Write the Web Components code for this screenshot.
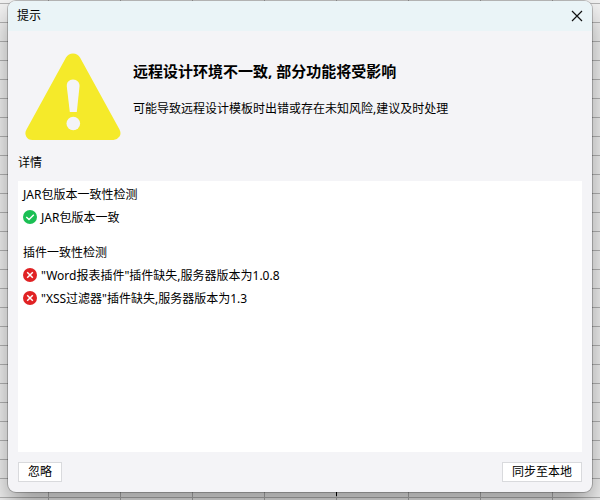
<!DOCTYPE html>
<html lang="zh-CN">
<head>
<meta charset="utf-8">
<meta name="viewport" content="width=device-width, initial-scale=1">
<title>提示</title>
<style>
  * { box-sizing: border-box; }
  body {
    margin: 0;
    font: 12px/18px "Noto Sans", "Noto Sans CJK SC", sans-serif;
    color: #000;
  }
</style>
</head>
<body>
<sheet-backdrop>
  <message-dialog title="提示">
    <warning-banner>
      <span slot="heading">远程设计环境不一致, 部分功能将受影响</span>
      可能导致远程设计模板时出错或存在未知风险,建议及时处理
    </warning-banner>
    <detail-panel label="详情">
      <check-group label="JAR包版本一致性检测">
        <check-item status="ok">JAR包版本一致</check-item>
      </check-group>
      <check-group label="插件一致性检测">
        <check-item status="error">"Word报表插件"插件缺失,服务器版本为1.0.8</check-item>
        <check-item status="error">"XSS过滤器"插件缺失,服务器版本为1.3</check-item>
      </check-group>
    </detail-panel>
    <dialog-button slot="actions">忽略</dialog-button>
    <dialog-button slot="actions">同步至本地</dialog-button>
  </message-dialog>
</sheet-backdrop>

<script>
function attach(el, html) {
  const root = el.attachShadow({ mode: 'open' });
  const template = document.createElement('template');
  template.innerHTML = html;
  root.append(template.content.cloneNode(true));
  return root;
}

// spreadsheet cells behind the dialog, with the page break mark at the bottom
class SheetBackdrop extends HTMLElement {
  constructor() {
    super();
    attach(this, `
      <style>
        :host {
          display: flex;
          box-sizing: border-box;
          min-height: 100vh;
          padding: 1px 8px 8px;
          overflow: hidden;
          background-color: #f3f3f3;
          background-image:
            linear-gradient(#000, #000),
            linear-gradient(#b4b4b4 1px, transparent 1px),
            linear-gradient(90deg, #b4b4b4 1px, transparent 1px);
          background-size: 1px 16px, 100% 19px, 72px 100%;
          background-position: left 336px bottom 4px, 0 3px, 48px 0;
          background-repeat: no-repeat, repeat, repeat;
        }
      </style>
      <slot></slot>
    `);
  }
}
customElements.define('sheet-backdrop', SheetBackdrop);

class MessageDialog extends HTMLElement {
  constructor() {
    super();
    this.root = attach(this, `
      <style>
        :host {
          display: flex;
          flex-direction: column;
          flex: 1;
          min-width: 0;
          border-radius: 8px;
          background: #f4f4f7;
          box-shadow: 0 0 0 1px rgba(0, 0, 0, .22), 0 14px 28px rgba(0, 0, 0, .38);
        }
        header {
          display: flex;
          align-items: center;
          justify-content: space-between;
          height: 30px;
          padding: 0 9px;
          border-radius: 8px 8px 0 0;
          background: #eaf4f7;
        }
        h1 {
          margin: 0;
          font: inherit;
        }
        .close {
          display: flex;
          padding: 0;
          border: 0;
          background: none;
          cursor: pointer;
        }
        .content {
          display: flex;
          flex-direction: column;
          flex: 1;
          padding: 0 10px;
        }
        footer {
          display: flex;
          justify-content: space-between;
          padding: 10px;
        }
      </style>
      <header>
        <h1></h1>
        <button class="close" type="button" aria-label="关闭">
          <svg width="12" height="12" viewBox="0 0 12 12" fill="none" stroke="#111" stroke-width="1.2">
            <path d="M1 1l10 10M11 1L1 11"/>
          </svg>
        </button>
      </header>
      <div class="content"><slot></slot></div>
      <footer><slot name="actions"></slot></footer>
    `);
  }

  connectedCallback() {
    this.root.querySelector('h1').textContent = this.getAttribute('title') || '';
    this.root.querySelector('.close').onclick = () => this.remove();
  }
}
customElements.define('message-dialog', MessageDialog);

class WarningBanner extends HTMLElement {
  constructor() {
    super();
    attach(this, `
      <style>
        :host {
          display: flex;
          gap: 12px;
          padding: 22px 0 13px 7px;
        }
        svg { flex: none; }
        h2 {
          margin: 8px 0 19px;
          font-size: 15px;
          line-height: 20px;
          font-weight: 700;
        }
        p { margin: 0; }
      </style>
      <svg width="96" height="88" viewBox="0 0 96 88">
        <path fill="#f5ea2a" d="M41 4.5Q43.500 0.500 48 0.500T55 4.500L94.500 76.500Q96.500 80.500 94.500 83.500T88.500 87H7.500Q3 87 1.200 83.500T1.500 76.500Z"/>
        <path fill="#f4f4f7" d="M48 26.500c4 0 6.800 2.900 6.500 7L51.800 59H44.800L41.800 33.500c-.4-4.100 2.200-7 6.200-7z"/>
        <circle cx="48.300" cy="70.500" r="6.800" fill="#f4f4f7"/>
      </svg>
      <div>
        <h2><slot name="heading"></slot></h2>
        <p><slot></slot></p>
      </div>
    `);
  }
}
customElements.define('warning-banner', WarningBanner);

class DetailPanel extends HTMLElement {
  constructor() {
    super();
    this.root = attach(this, `
      <style>
        :host {
          display: flex;
          flex-direction: column;
          flex: 1;
        }
        h3 {
          margin: 0 0 9px;
          font: inherit;
        }
        .box {
          flex: 1;
          padding: 5px;
          background: #fff;
        }
      </style>
      <h3></h3>
      <div class="box"><slot></slot></div>
    `);
  }

  connectedCallback() {
    this.root.querySelector('h3').textContent = this.getAttribute('label') || '';
  }
}
customElements.define('detail-panel', DetailPanel);

class CheckGroup extends HTMLElement {
  constructor() {
    super();
    this.root = attach(this, `
      <style>
        :host {
          display: flex;
          flex-direction: column;
          gap: 5px;
          margin-bottom: 17px;
        }
        h4 {
          margin: 0;
          font: inherit;
        }
      </style>
      <h4></h4>
      <slot></slot>
    `);
  }

  connectedCallback() {
    this.root.querySelector('h4').textContent = this.getAttribute('label') || '';
  }
}
customElements.define('check-group', CheckGroup);

const STATUS_ICONS = {
  ok: `<circle cx="7" cy="7" r="7" fill="#1abf54"/>
       <path d="M3.300 7l2.700 2.600 4.800-4.800" fill="none" stroke="#fff" stroke-width="1.400"/>`,
  error: `<circle cx="7" cy="7" r="7" fill="#e02224"/>
       <path d="M4.200 4.200l5.600 5.600M9.800 4.200l-5.600 5.600" fill="none" stroke="#fff" stroke-width="1.500"/>`
};

class CheckItem extends HTMLElement {
  constructor() {
    super();
    this.root = attach(this, `
      <style>
        :host {
          display: flex;
          align-items: flex-start;
          gap: 4px;
        }
        svg {
          flex: none;
          margin-top: 1px;
        }
      </style>
      <svg width="14" height="14" viewBox="0 0 14 14"></svg>
      <span><slot></slot></span>
    `);
  }

  connectedCallback() {
    this.root.querySelector('svg').innerHTML = STATUS_ICONS[this.getAttribute('status')] || '';
  }
}
customElements.define('check-item', CheckItem);

class DialogButton extends HTMLElement {
  constructor() {
    super();
    attach(this, `
      <style>
        :host { display: block; }
        button {
          display: block;
          height: 20px;
          padding: 0 9px;
          border: 1px solid #d9dadd;
          background: #fff;
          color: inherit;
          font: inherit;
          cursor: pointer;
        }
        button:hover { background: #f0f6fb; }
      </style>
      <button type="button"><slot></slot></button>
    `);
  }
}
customElements.define('dialog-button', DialogButton);
</script>
</body>
</html>
